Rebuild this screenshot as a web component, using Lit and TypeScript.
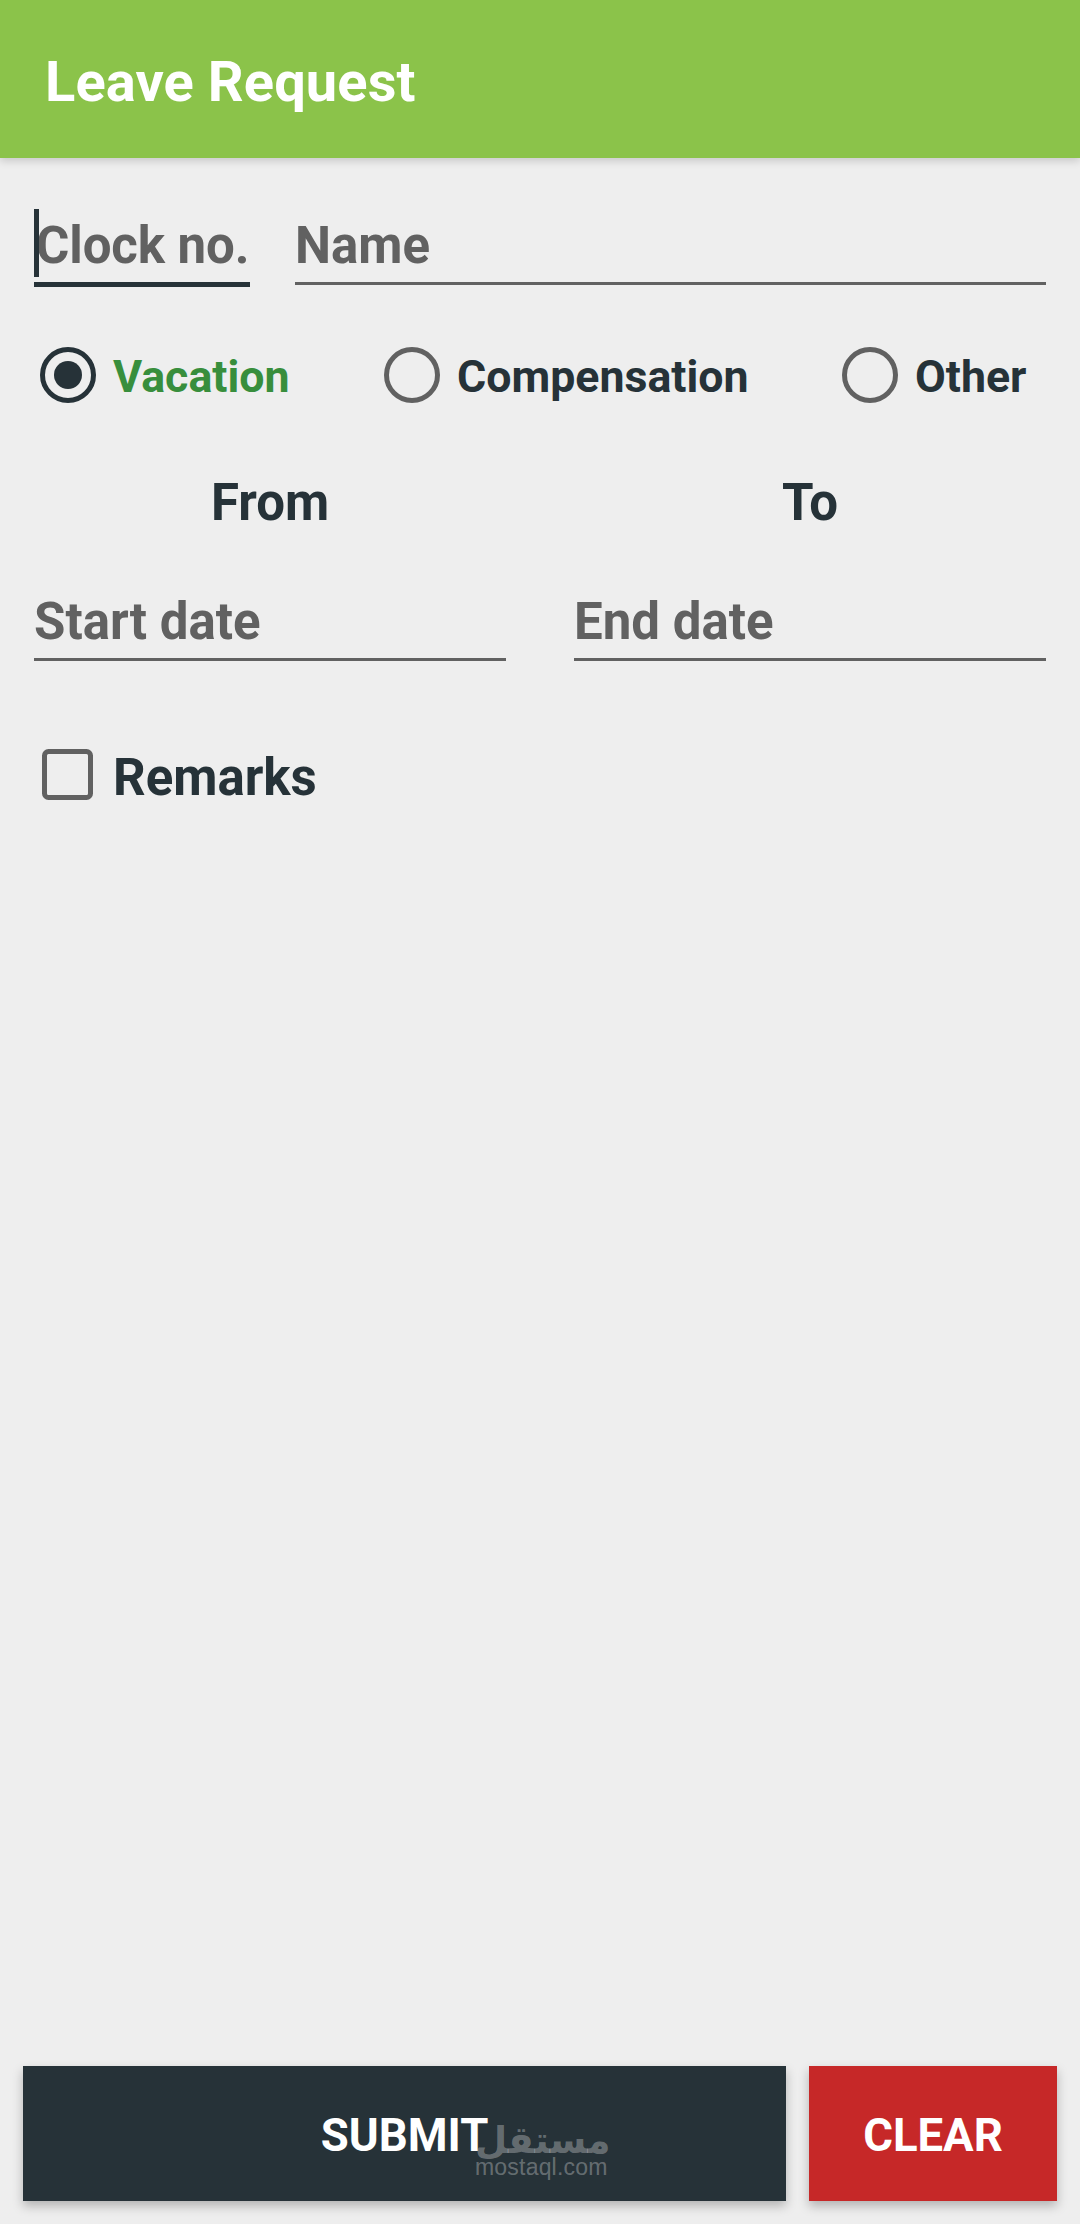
import { LitElement, html, css } from 'lit';
import { customElement, property } from 'lit/decorators.js';

@customElement('leave-field')
export class LeaveField extends LitElement {
  @property({ type: String }) hint = '';

  static styles = css`
    :host {
      display: block;
      min-width: 0;
    }
    .field {
      height: 63px;
      box-sizing: content-box;
      border-bottom: 3px solid #616161;
      font-size: 51px;
      line-height: 54px;
      font-weight: 700;
      color: #616161;
      white-space: nowrap;
    }
  `;

  render() {
    return html`<div class="field">${this.hint}</div>`;
  }
}

@customElement('app-root')
export class AppRoot extends LitElement {
  static styles = css`
    :host {
      display: block;
      font-family: Roboto, sans-serif;
    }
    .page {
      height: 2224px;
      background: #eeeeee;
      display: flex;
      flex-direction: column;
      overflow: hidden;
    }
    .bar {
      height: 158px;
      flex: none;
      box-sizing: border-box;
      background: #8bc34a;
      box-shadow: 0 3px 8px rgba(0, 0, 0, 0.16);
      display: flex;
      align-items: center;
      padding: 5px 45px 0;
      color: #ffffff;
      font-size: 56px;
      font-weight: 700;
      letter-spacing: 0.1px;
    }
    .form {
      flex: 1;
      padding: 0 34px;
    }
    .names {
      display: flex;
      gap: 45px;
      margin-top: 61px;
    }
    .clock {
      position: relative;
      flex: none;
      width: 216px;
    }
    .clock .text {
      height: 63px;
      line-height: 54px;
      font-size: 51px;
      font-weight: 700;
      color: #616161;
      white-space: nowrap;
      border-bottom: 5px solid #263238;
      padding-left: 2px;
      box-sizing: content-box;
      width: 214px;
      letter-spacing: -0.1px;
    }
    .caret {
      position: absolute;
      left: 0;
      top: -10px;
      width: 5px;
      height: 68px;
      background: #263238;
    }
    .name {
      flex: 1;
    }
    .radios {
      display: flex;
      margin-top: 60px;
      padding-left: 6px;
      height: 56px;
    }
    .radio {
      display: flex;
      align-items: center;
      gap: 17px;
      font-size: 44.7px;
      line-height: 52px;
      font-weight: 700;
      color: #263238;
    }
    .radio .label {
      padding-top: 4px;
    }
    .radio.on {
      color: #388e3c;
      width: 344px;
    }
    .radio.mid {
      width: 458px;
    }
    .dot {
      width: 56px;
      height: 56px;
      flex: none;
    }
    .dates {
      display: grid;
      grid-template-columns: 472px 472px;
      gap: 0 68px;
      margin-top: 70px;
    }
    .head {
      text-align: center;
      font-size: 51px;
      font-weight: 700;
      line-height: 60px;
      color: #263238;
      margin-bottom: 62px;
    }
    .check {
      display: flex;
      align-items: flex-start;
      gap: 20px;
      height: 51px;
      margin: 88px 0 0 8px;
      font-size: 51px;
      line-height: 58px;
      font-weight: 700;
      color: #263238;
    }
    .box {
      width: 51px;
      height: 51px;
      flex: none;
    }
    .actions {
      display: flex;
      gap: 23px;
      padding: 0 23px 23px;
      flex: none;
    }
    .btn {
      height: 135px;
      padding-top: 3px;
      box-sizing: border-box;
      display: flex;
      align-items: center;
      justify-content: center;
      color: #ffffff;
      font-size: 45.5px;
      font-weight: 700;
      box-shadow: 0 5px 10px rgba(0, 0, 0, 0.25);
    }
    .submit {
      flex: 1;
      background: #263238;
      position: relative;
    }
    .clear {
      width: 248px;
      flex: none;
      background: #c62828;
    }
    .mark {
      position: absolute;
      left: 452px;
      top: 55px;
      width: 130px;
      text-align: center;
      white-space: nowrap;
      color: rgba(255, 255, 255, 0.3);
      font-weight: 400;
    }
    .mark .ar {
      font-family: 'DejaVu Sans', sans-serif;
      font-size: 37px;
      font-weight: 700;
      line-height: 40px;
      height: 34px;
    }
    .mark .en {
      font-family: 'Liberation Sans', sans-serif;
      font-size: 23px;
      line-height: 24px;
      letter-spacing: 0.2px;
    }
  `;

  render() {
    return html`
      <div class="page">
        <div class="bar">Leave Request</div>
        <div class="form">
          <div class="names">
            <div class="clock">
              <div class="caret"></div>
              <div class="text">Clock no.</div>
            </div>
            <leave-field class="name" hint="Name"></leave-field>
          </div>
          <div class="radios">
            <div class="radio on">
              <svg class="dot" viewBox="0 0 56 56">
                <circle cx="28" cy="28" r="25.5" fill="none" stroke="#263238" stroke-width="5"></circle>
                <circle cx="28" cy="28" r="14" fill="#263238"></circle>
              </svg>
              <span class="label">Vacation</span>
            </div>
            <div class="radio mid">
              <svg class="dot" viewBox="0 0 56 56">
                <circle cx="28" cy="28" r="25.5" fill="none" stroke="#616161" stroke-width="5"></circle>
              </svg>
              <span class="label">Compensation</span>
            </div>
            <div class="radio">
              <svg class="dot" viewBox="0 0 56 56">
                <circle cx="28" cy="28" r="25.5" fill="none" stroke="#616161" stroke-width="5"></circle>
              </svg>
              <span class="label">Other</span>
            </div>
          </div>
          <div class="dates">
            <div class="head">From</div>
            <div class="head">To</div>
            <leave-field hint="Start date"></leave-field>
            <leave-field hint="End date"></leave-field>
          </div>
          <div class="check">
            <svg class="box" viewBox="0 0 51 51">
              <rect x="2.5" y="2.5" width="46" height="46" rx="4" fill="none" stroke="#616161" stroke-width="5"></rect>
            </svg>
            Remarks
          </div>
        </div>
        <div class="actions">
          <div class="btn submit">
            SUBMIT
            <div class="mark">
              <div class="ar">مستقل</div>
              <div class="en">mostaql.com</div>
            </div>
          </div>
          <div class="btn clear">CLEAR</div>
        </div>
      </div>
    `;
  }
}

declare global {
  interface HTMLElementTagNameMap {
    'app-root': AppRoot;
    'leave-field': LeaveField;
  }
}
